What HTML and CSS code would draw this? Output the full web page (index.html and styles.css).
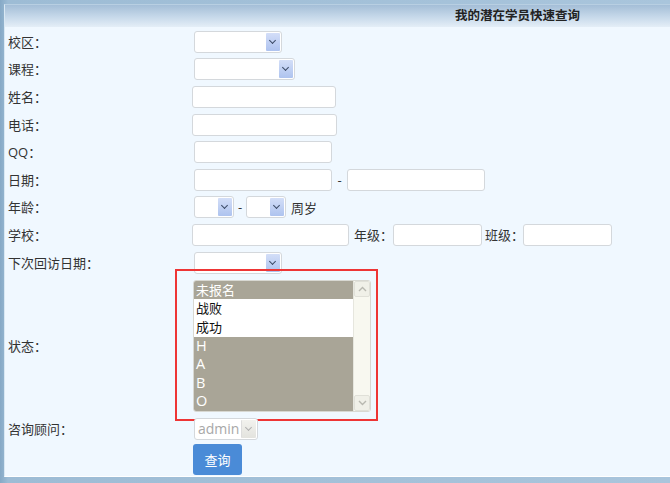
FILE: index.html
```html
<!DOCTYPE html>
<html lang="zh">
<head>
<meta charset="utf-8">
<title>我的潜在学员快速查询</title>
<link rel="stylesheet" href="styles.css">
</head>
<body>
<div class="panel">
  <div class="header">我的潜在学员快速查询</div>
  <div class="form">
    <div class="row">
      <div class="label">校区：</div>
      <div class="field"><span class="sel w88"><span class="arrow"></span></span></div>
    </div>
    <div class="row">
      <div class="label">课程：</div>
      <div class="field"><span class="sel w101"><span class="arrow"></span></span></div>
    </div>
    <div class="row">
      <div class="label">姓名：</div>
      <div class="field"><span class="inp w144 flush"></span></div>
    </div>
    <div class="row">
      <div class="label">电话：</div>
      <div class="field"><span class="inp w145 flush"></span></div>
    </div>
    <div class="row">
      <div class="label">QQ：</div>
      <div class="field"><span class="inp w138"></span></div>
    </div>
    <div class="row">
      <div class="label">日期：</div>
      <div class="field"><span class="inp w138"></span><span class="dash">-</span><span class="inp w138 tight"></span></div>
    </div>
    <div class="row">
      <div class="label">年龄：</div>
      <div class="field"><span class="sel w40"><span class="arrow"></span></span><span class="dash narrow">-</span><span class="sel w40 tight"><span class="arrow"></span></span><span class="txt">周岁</span></div>
    </div>
    <div class="row">
      <div class="label">学校：</div>
      <div class="field"><span class="inp w157 flush"></span><span class="txt">年级：</span><span class="inp w89 tight"></span><span class="txt close">班级：</span><span class="inp w89 tight"></span></div>
    </div>
    <div class="row">
      <div class="label">下次回访日期：</div>
      <div class="field"><span class="sel w88"><span class="arrow"></span></span></div>
    </div>
    <div class="row status">
      <div class="label">状态：</div>
      <div class="field">
        <div class="listbox">
          <div class="options">
            <div class="opt on">未报名</div>
            <div class="opt">战败</div>
            <div class="opt">成功</div>
            <div class="opt on latin">H</div>
            <div class="opt on latin">A</div>
            <div class="opt on latin">B</div>
            <div class="opt on latin">O</div>
          </div>
          <div class="scrollbar">
            <span class="sbtn"><svg width="9" height="6" viewBox="0 0 9 6"><path d="M1 5 L4.5 1.5 L8 5" fill="none" stroke="#b8b8b0" stroke-width="1.4"/></svg></span>
            <span class="sbtn"><svg width="9" height="6" viewBox="0 0 9 6"><path d="M1 1 L4.5 4.5 L8 1" fill="none" stroke="#b8b8b0" stroke-width="1.4"/></svg></span>
          </div>
        </div>
      </div>
      <div class="mark"></div>
    </div>
    <div class="row">
      <div class="label">咨询顾问：</div>
      <div class="field"><span class="sel w64 disabled"><span class="seltext">admin</span><span class="arrow"></span></span></div>
    </div>
    <div class="row btnrow">
      <div class="label"></div>
      <div class="field"><button class="btn" type="button">查询</button></div>
    </div>
  </div>
</div>
</body>
</html>
```

FILE: styles.css
```css
html, body {
  margin: 0;
  padding: 0;
  height: 100%;
}
body {
  background: linear-gradient(to right, #86a9c6, #9dbcd5 8px, #a9c5dc);
  font-family: "Open Sans", "Noto Sans CJK SC", sans-serif;
  font-size: 13px;
  color: #333;
  overflow: hidden;
}
.panel {
  margin: 4px 0 0 4px;
  height: 473px;
  background: #f0f8ff;
  border-top: 1px solid #b8cfe2;
  border-left: 1px solid #d9e8f3;
  border-bottom: 1px solid #ffffff;
  box-sizing: border-box;
  position: relative;
}
.header {
  height: 22px;
  line-height: 22px;
  background: linear-gradient(to bottom, #a4bed7, #c7d9ea 55%, #e4eef7);
  font-weight: bold;
  font-size: 12.5px;
  color: #222;
  padding-left: 450px;
}
.form {
  padding-top: 1px;
}
.row {
  display: flex;
  align-items: center;
  height: 27.6px;
  position: relative;
}
.label {
  width: 183px;
  padding-left: 3px;
  flex: none;
  line-height: 18px;
  white-space: nowrap;
}
.field {
  display: flex;
  align-items: center;
}
.sel, .inp {
  display: inline-block;
  position: relative;
  box-sizing: border-box;
  height: 22px;
  background: #fff;
  border: 1px solid #d4d8dc;
  border-radius: 3px;
  margin-left: 3px;
  flex: none;
}
.inp.flush { margin-left: 1px; }
.tight { margin-left: 0; }
.sel .arrow {
  position: absolute;
  right: 1px;
  top: 1px;
  bottom: 1px;
  width: 14px;
  background: linear-gradient(to bottom, #d3def8, #aec3ef);
  border-radius: 1px;
}
.sel .arrow::after {
  content: "";
  position: absolute;
  left: 4px;
  top: 5px;
  width: 4px;
  height: 4px;
  border-right: 1.6px solid #3b4a66;
  border-bottom: 1.6px solid #3b4a66;
  transform: rotate(45deg);
}
.sel.disabled .arrow {
  background: linear-gradient(to bottom, #f2f2ee, #e3e3de);
  border-left: 1px solid #ddd;
}
.sel.disabled .arrow::after {
  border-color: #b0b0b0;
}
.seltext {
  position: absolute;
  left: 3px;
  top: 0;
  line-height: 20px;
  font-size: 14px;
  color: #a8a8a8;
}
.w40 { width: 40px; }
.w64 { width: 64px; }
.w88 { width: 88px; }
.w89 { width: 89px; }
.w101 { width: 101px; }
.w138 { width: 138px; }
.w144 { width: 144px; }
.w145 { width: 145px; }
.w157 { width: 157px; }
.dash {
  width: 15px;
  text-align: center;
  flex: none;
}
.dash.narrow {
  width: 12px;
}
.txt {
  padding: 0 0 0 5px;
  white-space: nowrap;
  flex: none;
}
.txt.close {
  padding-left: 3px;
  margin-right: -1px;
}
.row.status {
  height: 139px;
}
.listbox {
  margin-left: 2px;
  width: 178px;
  height: 132px;
  box-sizing: border-box;
  border: 1px solid #d8d8d2;
  border-radius: 3px;
  display: flex;
  background: #fff;
  overflow: hidden;
}
.options {
  flex: 1;
}
.opt {
  height: 18.6px;
  line-height: 18.6px;
  padding-left: 2px;
  color: #111;
  font-size: 13px;
}
.opt.latin {
  font-size: 14.5px;
}
.opt.on {
  background: #a9a597;
  color: #fff;
}
.scrollbar {
  width: 16px;
  flex: none;
  background: #f8f8f0;
  border-left: 1px solid #e6e6de;
  display: flex;
  flex-direction: column;
  justify-content: space-between;
}
.sbtn {
  height: 16px;
  display: flex;
  align-items: center;
  justify-content: center;
  background: #f0f0e8;
  border: 1px solid #e0e0d8;
  border-radius: 2px;
  box-sizing: border-box;
}
.mark {
  position: absolute;
  left: 170px;
  top: -7px;
  width: 203px;
  height: 152px;
  border: 2px solid #ee3535;
  box-sizing: border-box;
  pointer-events: none;
}
.row.btnrow {
  height: 34px;
}
.btn {
  margin-left: 2px;
  width: 49px;
  height: 31px;
  border: none;
  border-radius: 3px;
  background: #4a8bd7;
  color: #fff;
  font-family: "Open Sans", "Noto Sans CJK SC", sans-serif;
  font-size: 13px;
  padding: 0;
}
```
